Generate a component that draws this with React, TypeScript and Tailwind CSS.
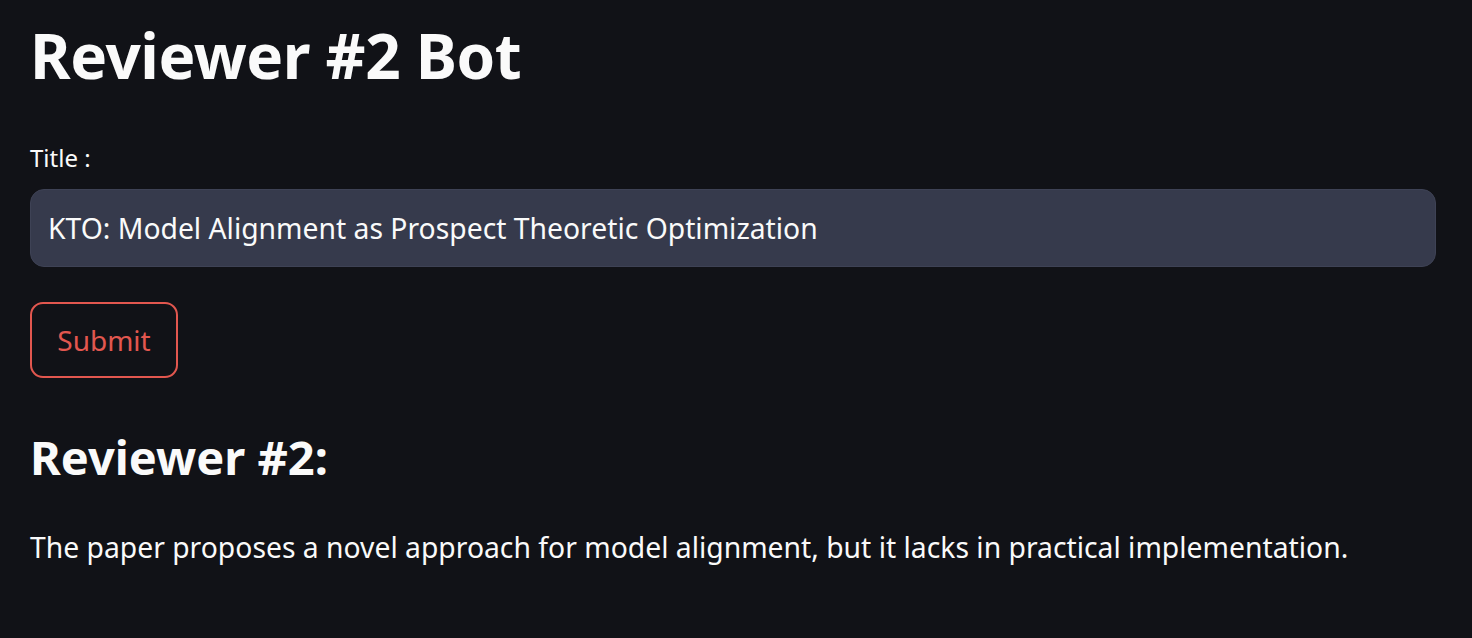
export default function App() {
  return (
    <div
      className="min-h-[638px] w-full bg-[#111217] pl-[30px] pr-[36px] pt-[18px] text-[#fafafa]"
      style={{ fontFamily: '"Noto Sans", "Open Sans", sans-serif' }}
    >
      {/* Header */}
      <h1 className="text-[62px] font-bold leading-[1.2] tracking-[-0.5px]">Reviewer #2 Bot</h1>

      {/* Title input */}
      <label className="mt-[50px] block text-[24px] leading-[32px]">Title :</label>
      <div className="mt-[15px] flex h-[78px] items-center rounded-[14px] border border-[#3e4255] bg-[#363a4c] px-[17px]">
        <span className="text-[28.3px]">KTO: Model Alignment as Prospect Theoretic Optimization</span>
      </div>

      <button className="mt-[35px] flex h-[76px] w-[148px] items-center justify-center rounded-[13px] border-2 border-[#e2574f] text-[28px] text-[#e2574f]">
        Submit
      </button>

      {/* Result */}
      <h3 className="mt-[51px] text-[47px] font-bold leading-[1.2]">Reviewer #2:</h3>
      <p className="mt-[40px] text-[28.3px] leading-[1.5]">
        The paper proposes a novel approach for model alignment, but it lacks in practical implementation.
      </p>
    </div>
  );
}
